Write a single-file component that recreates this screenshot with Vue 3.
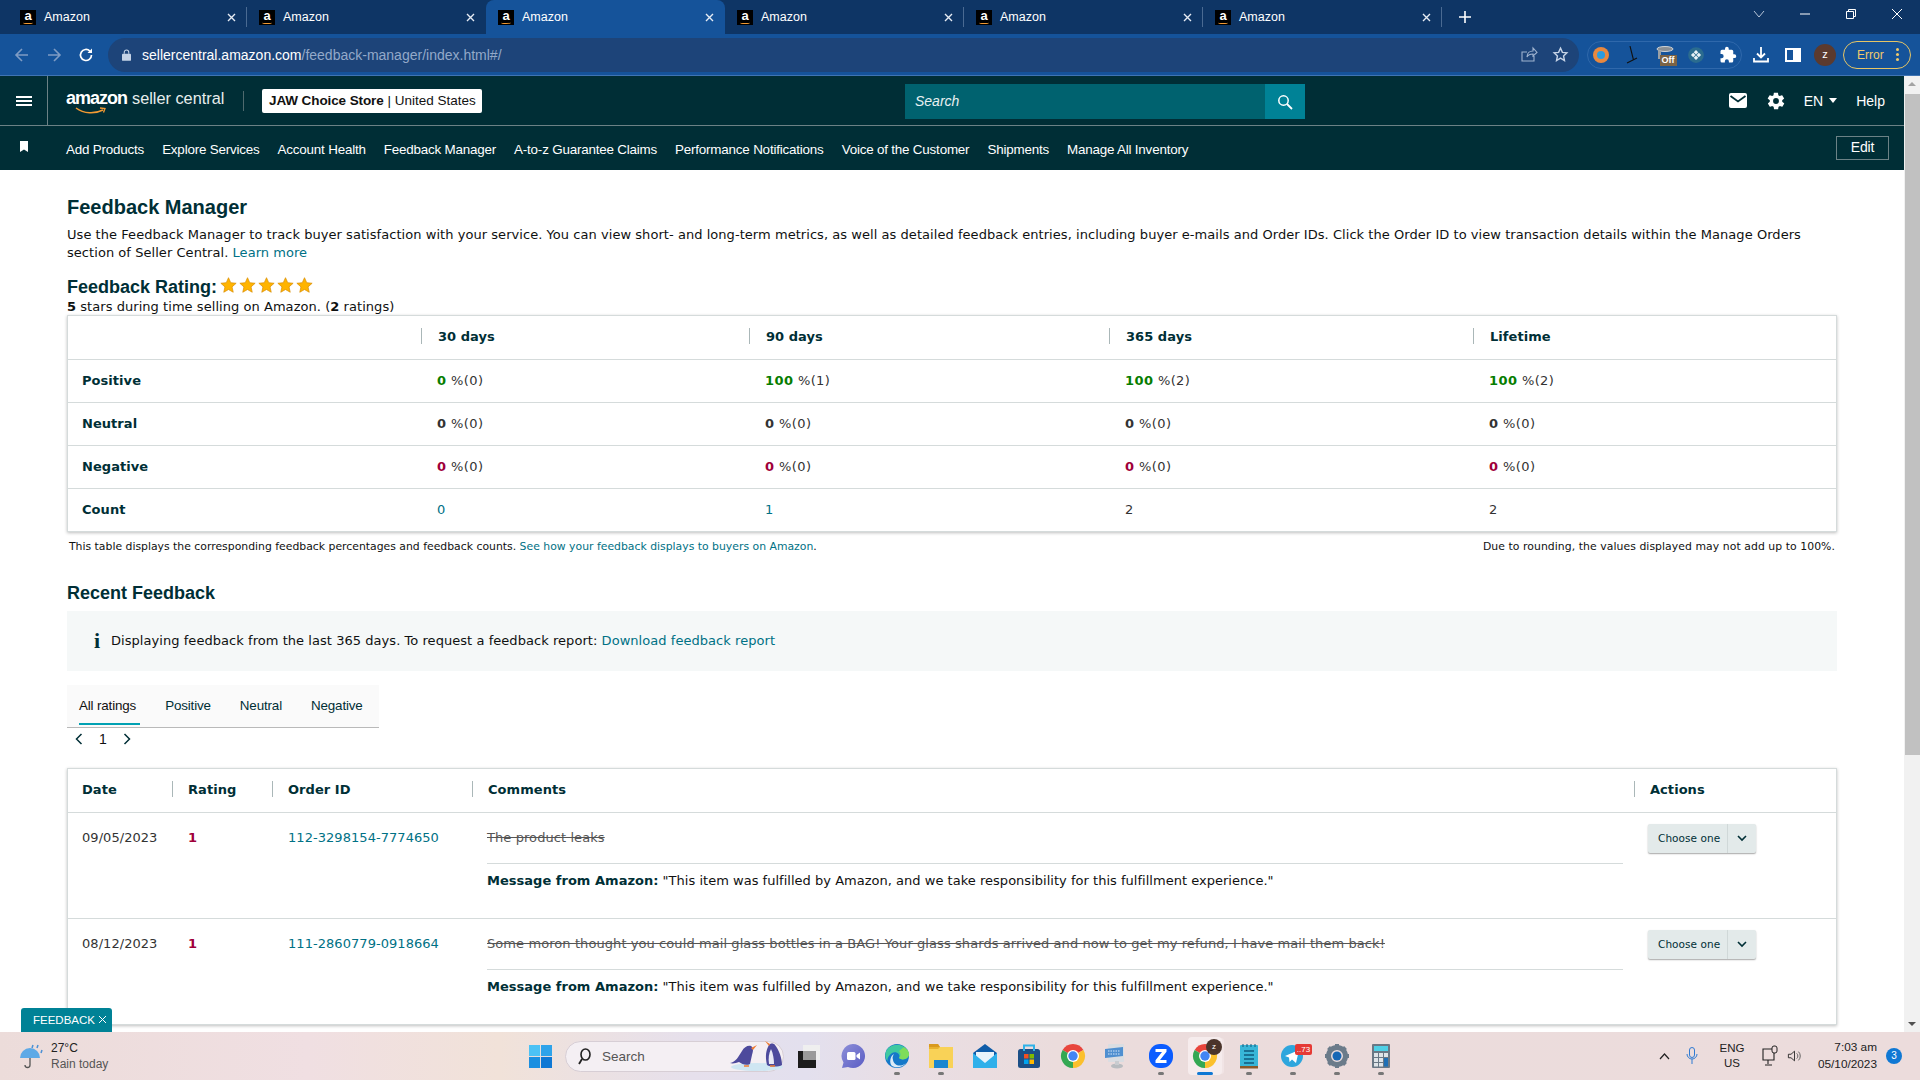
<template>
  <div class="screen">
    <!-- browser tabs -->
    <div class="tabstrip">
      <div v-for="(tab, i) in tabs" :key="i" class="tab" :class="{ active: i === 2 }">
        <span class="favicon">a</span>
        <span class="tab-title">Amazon</span>
        <svg class="tab-x" width="9" height="9" viewBox="0 0 9 9"><path d="M1 1l7 7M8 1L1 8" stroke="#e6ecf4" stroke-width="1.400" /></svg>
      </div>
      <svg class="newtab" width="12" height="12" viewBox="0 0 12 12"><path d="M6 0v12M0 6h12" stroke="#fff" stroke-width="1.600" /></svg>
      <div class="winbtns">
        <svg width="12" height="8" viewBox="0 0 12 8"><path d="M1 1l5 6 5-6" fill="none" stroke="#b7c5d8" /></svg>
        <svg width="12" height="12" viewBox="0 0 12 12"><path d="M1 6h10" stroke="#fff" /></svg>
        <svg width="12" height="12" viewBox="0 0 12 12"><path d="M1.500 3.500h7v7h-7zM3.500 3V1.500h7v7H9" fill="none" stroke="#fff" /></svg>
        <svg width="12" height="12" viewBox="0 0 12 12"><path d="M1 1l10 10M11 1L1 11" stroke="#fff" /></svg>
      </div>
    </div>

    <!-- browser toolbar -->
    <div class="toolbar">
      <svg class="navic" width="16" height="16" viewBox="0 0 16 16"><path d="M14 8H2M8 2L2 8l6 6" fill="none" stroke="#7f9cc4" stroke-width="1.600" /></svg>
      <svg class="navic" width="16" height="16" viewBox="0 0 16 16"><path d="M2 8h12M8 2l6 6-6 6" fill="none" stroke="#7f9cc4" stroke-width="1.600" /></svg>
      <svg class="navic" width="16" height="16" viewBox="0 0 16 16"><path d="M13.500 8a5.500 5.500 0 1 1-1.600-3.900" fill="none" stroke="#fff" stroke-width="1.700" /><path d="M14 1.500V6H9.500z" fill="#fff" /></svg>
      <div class="omnibox">
        <svg width="9" height="12" viewBox="0 0 10 13"><path d="M2.500 5V3.500a2.500 2.500 0 0 1 5 0V5" fill="none" stroke="#c5d3e6" stroke-width="1.200" /><rect y="5" width="10" height="8" rx="1" fill="#c5d3e6" /></svg>
        <span class="url"><span class="url-host">sellercentral.amazon.com</span>/feedback-manager/index.html#/</span>
        <svg class="omni-share" width="18" height="18" viewBox="0 0 18 18"><path d="M14 10v5H2V6h5M7 11c0-4 3-6 6-6V2l4 4.500L13 10V8c-3 0-5 1-6 3z" fill="none" stroke="#9fb3cf" stroke-width="1.100" /></svg>
        <svg width="17" height="17" viewBox="0 0 24 24"><path d="M12 3l2.700 6 6.300.7-4.700 4.300 1.300 6.500L12 17.200 6.400 20.500 7.700 14 3 9.700 9.300 9z" fill="none" stroke="#c5d3e6" stroke-width="2" /></svg>
      </div>
      <div class="extensions">
        <svg width="18" height="18" viewBox="0 0 18 18"><circle cx="9" cy="9" r="8" fill="#e8883f" /><circle cx="9" cy="9" r="4" fill="#2a9be0" /></svg>
        <svg width="18" height="18" viewBox="0 0 18 18"><path d="M6 0l3.500 14M3 17l10-5" stroke="#111" stroke-width="1.100" /></svg>
        <span class="ext-off">
          <svg width="18" height="14" viewBox="0 0 18 14"><ellipse cx="9" cy="3" rx="8" ry="2.500" fill="#8a8f94" stroke="#cfd3d6" /><path d="M2 4v9h3V5z" fill="#9aa0a5" /></svg>
          <span class="off-badge">Off</span>
        </span>
        <svg width="18" height="18" viewBox="0 0 16 16"><circle cx="8" cy="8" r="7" fill="#2b6c8f" /><path d="M8 3.500l2 2-2 2-2-2zM8 8.500l2 2-2 2-2-2zM3.500 8l2-2 2 2-2 2zM8.500 8l2-2 2 2-2 2z" fill="#e8f1f6" /></svg>
        <svg width="18" height="18" viewBox="0 0 24 24"><path d="M20.500 11H19V7a2 2 0 0 0-2-2h-4V3.500a2.500 2.500 0 0 0-5 0V5H4a2 2 0 0 0-2 2v3.800h1.500a2.700 2.700 0 0 1 0 5.400H2V20a2 2 0 0 0 2 2h3.800v-1.500a2.700 2.700 0 0 1 5.400 0V22H17a2 2 0 0 0 2-2v-4h1.500a2.500 2.500 0 0 0 0-5z" fill="#fff" /></svg>
      </div>
      <svg width="18" height="18" viewBox="0 0 18 18"><path d="M9 1v10M5 7.500L9 11.500l4-4M2 12v3.500h14V12" fill="none" stroke="#fff" stroke-width="1.800" /></svg>
      <svg class="sidepanel" width="16" height="16" viewBox="0 0 16 16"><path d="M1 2h14v12H1z" fill="none" stroke="#fff" stroke-width="2" /><path d="M8 2h7v12H8z" fill="#fff" /></svg>
      <span class="avatar">z</span>
      <span class="errorpill">Error<i class="dots"></i></span>
    </div>

    <!-- page -->
    <div class="viewport">
      <div class="page">
        <header class="sc-top">
          <div class="burger"><span></span><span></span><span></span></div>
          <div class="logo">
            <span class="logo-amazon">amazon</span><span class="logo-sc">seller central</span>
            <svg class="logo-smile" width="32" height="8" viewBox="0 0 32 8"><path d="M1 1c8 6 19 6 27 2" fill="none" stroke="#f29a33" stroke-width="1.500" /><path d="M25 1l5 .5-1.500 4" fill="none" stroke="#f29a33" stroke-width="1.300" /></svg>
          </div>
          <span class="logo-div"></span>
          <div class="store"><b>JAW Choice Store</b> | United States</div>
          <div class="search">
            <span class="search-input">Search</span>
            <span class="search-btn">
              <svg width="16" height="16" viewBox="0 0 16 16"><circle cx="6.500" cy="6.500" r="4.700" fill="none" stroke="#fff" stroke-width="1.500" /><path d="M10 10l5 5" stroke="#fff" stroke-width="1.800" /></svg>
            </span>
          </div>
          <div class="top-right">
            <svg width="18" height="15" viewBox="0 0 18 15"><rect width="18" height="15" rx="2" fill="#fff" /><path d="M1.500 3L9 8.500 16.500 3" fill="none" stroke="#002e36" stroke-width="1.800" /></svg>
            <svg class="gear" width="20" height="20" viewBox="0 0 24 24"><path fill="#fff" fill-rule="evenodd" d="M19.400 13c.1-.3.100-.7.100-1s0-.7-.1-1l2.100-1.600c.2-.2.200-.4.100-.6l-2-3.500c-.1-.2-.4-.3-.6-.2l-2.500 1c-.5-.4-1.100-.7-1.700-1l-.4-2.700c0-.2-.2-.4-.5-.4h-4c-.3 0-.5.200-.5.400l-.4 2.700c-.6.300-1.200.6-1.700 1l-2.500-1c-.2-.1-.5 0-.6.200l-2 3.500c-.1.200-.1.400.1.600L4.600 11c-.1.300-.1.700-.1 1s0 .7.100 1l-2.100 1.600c-.2.200-.2.400-.1.600l2 3.500c.1.200.4.300.6.200l2.500-1c.5.400 1.100.7 1.700 1l.4 2.700c0 .2.200.4.500.4h4c.3 0 .5-.2.500-.4l.4-2.700c.6-.3 1.200-.6 1.700-1l2.500 1c.2.100.5 0 .6-.2l2-3.500c.1-.2.100-.4-.1-.6L19.400 13zM12 15.500a3.500 3.500 0 1 1 0-7 3.500 3.500 0 0 1 0 7z" /></svg>
            <span class="lang">EN<i class="caret"></i></span>
            <span class="help">Help</span>
          </div>
        </header>
        <nav class="sc-nav">
          <svg class="bookmark" width="8" height="11" viewBox="0 0 8 11"><path d="M0 0h8v11L4 8.500 0 11z" fill="#fff" /></svg>
          <a v-for="link in navLinks" :key="link">{{ link }}</a>
          <span class="edit">Edit</span>
        </nav>

        <main class="content">
          <h1>Feedback Manager</h1>
          <p class="intro">Use the Feedback Manager to track buyer satisfaction with your service. You can view short- and long-term metrics, as well as detailed feedback entries, including buyer e-mails and Order IDs. Click the Order ID to view transaction details within the Manage Orders section of Seller Central. <a>Learn more</a></p>

          <div class="rating-head">
            <h2>Feedback Rating:</h2>
            <svg v-for="n in 5" :key="n" width="17" height="16" viewBox="0 0 24 23"><path d="M12 1l3.200 7.200 7.800.8-5.900 5.200 1.700 7.700L12 18l-6.800 3.900 1.700-7.700L1 9l7.800-.8z" fill="#ffb400" stroke="#d88c00" stroke-width="1" /></svg>
          </div>
          <p class="rating-sub"><b>5</b> stars during time selling on Amazon. (<b>2</b> ratings)</p>

          <div class="card metrics">
            <div class="m-row m-head">
              <div></div>
              <div v-for="h in periods" :key="h" class="th">{{ h }}</div>
            </div>
            <div v-for="row in metrics" :key="row.label" class="m-row">
              <div class="row-label">{{ row.label }}</div>
              <div v-for="(cell, i) in row.cells" :key="i" class="td">
                <template v-if="row.label === 'Count'"><span :class="{ link: i < 2 }">{{ cell[0] }}</span></template>
                <template v-else><b :class="row.tone">{{ cell[0] }}</b> %({{ cell[1] }})</template>
              </div>
            </div>
          </div>
          <div class="table-note">
            <span>This table displays the corresponding feedback percentages and feedback counts. <a>See how your feedback displays to buyers on Amazon</a>.</span>
            <span class="note-right">Due to rounding, the values displayed may not add up to 100%.</span>
          </div>

          <h2 class="recent">Recent Feedback</h2>
          <div class="infobar">
            <span class="info-i">i</span>
            <span>Displaying feedback from the last 365 days. To request a feedback report: <a>Download feedback report</a></span>
          </div>

          <div class="tabs">
            <span v-for="(t, i) in filterTabs" :key="t" class="ftab" :class="{ on: i === 0 }">{{ t }}</span>
          </div>
          <div class="pager">
            <svg width="8" height="12" viewBox="0 0 8 12"><path d="M6.500 1L1.500 6l5 5" fill="none" stroke="#002f36" stroke-width="1.500" /></svg>
            <span>1</span>
            <svg width="8" height="12" viewBox="0 0 8 12"><path d="M1.500 1l5 5-5 5" fill="none" stroke="#002f36" stroke-width="1.500" /></svg>
          </div>

          <div class="card feed">
            <div class="f-row f-head">
              <div class="th">Date</div>
              <div class="th">Rating</div>
              <div class="th">Order ID</div>
              <div class="th">Comments</div>
              <div class="th">Actions</div>
            </div>
            <div v-for="item in feedback" :key="item.order" class="f-row f-item">
              <div>{{ item.date }}</div>
              <div class="rate">1</div>
              <div class="link">{{ item.order }}</div>
              <div class="comment">
                <div class="strike">{{ item.comment }}</div>
                <div class="amz-msg"><b>Message from Amazon:</b> "This item was fulfilled by Amazon, and we take responsibility for this fulfillment experience."</div>
              </div>
              <div>
                <span class="choose">
                  <span class="choose-label">Choose one</span>
                  <span class="choose-arrow"><svg width="10" height="7" viewBox="0 0 10 7"><path d="M1 1l4 4 4-4" fill="none" stroke="#002f36" stroke-width="1.600" /></svg></span>
                </span>
              </div>
            </div>
          </div>
        </main>
        <div class="feedback-tab">FEEDBACK<svg width="9" height="9" viewBox="0 0 9 9"><path d="M1 1l7 7M8 1L1 8" stroke="#fff" /></svg></div>
      </div>
      <div class="scrollbar">
        <svg width="16" height="16" viewBox="0 0 16 16"><path d="M4 10l4-4 4 4z" fill="#a3a3a3" /></svg>
        <div class="thumb"></div>
        <svg width="16" height="16" viewBox="0 0 16 16"><path d="M4 6l4 4 4-4z" fill="#505050" /></svg>
      </div>
    </div>

    <!-- windows taskbar -->
    <div class="taskbar">
      <div class="weather">
        <svg width="24" height="25" viewBox="0 0 24 25"><path d="M0 14a10 10 0 0 1 20 0z" fill="#5ea9e6" /><path d="M10 14v7a2.500 2.500 0 0 1-5 0" fill="none" stroke="#555" stroke-width="1.300" /><path d="M13 1l-1 3M18 1l-1 3M22 6l-1 3" stroke="#4a90d6" stroke-width="1.500" /></svg>
        <div><div>27°C</div><div class="w-sub">Rain today</div></div>
      </div>
      <svg class="start" width="23" height="23" viewBox="0 0 24 24">
        <rect width="11.500" height="11.500" fill="#4cc2f5" /><rect x="12.500" width="11.500" height="11.500" fill="#2ea3ea" />
        <rect y="12.500" width="11.500" height="11.500" fill="#1b8fe0" /><rect x="12.500" y="12.500" width="11.500" height="11.500" fill="#0f78d4" />
      </svg>
      <div class="tb-search">
        <svg width="16" height="17" viewBox="0 0 16 17"><ellipse cx="9.500" cy="6.500" rx="4.500" ry="5.500" fill="none" stroke="#222" stroke-width="1.600" /><path d="M6 11L3 16" stroke="#222" stroke-width="1.800" /></svg>
        <span>Search</span>
        <svg class="penguins" width="56" height="32" viewBox="0 0 56 32">
          <ellipse cx="30" cy="28" rx="26" ry="4" fill="#cfe6f2" />
          <path d="M3 24c6-1 8-6 12-12 2-4 6-6 9-5 3 2 2 6 1 9l-2 9c-4 2-8 0-11-2-3 1-6 2-9 1z" fill="#4d4a9c" />
          <path d="M40 26c-2-9-1-15 2-20 1-2 5-2 6 0 4 5 7 13 7 20-3 2-12 2-15 0z" fill="#4d4a9c" />
          <path d="M42 25c-1-6 0-11 2-15 2 4 3 10 3 15z" fill="#e9e9f5" />
          <path d="M24 9l6-3-4 5zM42 7l-4-5 5 3z" fill="#ef7d35" />
          <path d="M17 27h5M43 27h5" stroke="#ef7d35" stroke-width="1.500" />
        </svg>
      </div>
      <div class="apps">
        <span v-for="app in apps" :key="app.id" class="app" :class="{ current: app.id === 'chrome2', running: app.dot }">
          <svg width="30" height="30" viewBox="0 0 30 30" v-html="app.svg"></svg>
          <em v-if="app.badge" class="app-badge" :class="app.badgeClass">{{ app.badge }}</em>
        </span>
      </div>
      <div class="tray">
        <svg width="11" height="7" viewBox="0 0 11 7"><path d="M1 6l4.500-5L10 6" fill="none" stroke="#222" stroke-width="1.200" /></svg>
        <svg class="mic" width="12" height="18" viewBox="0 0 12 18"><rect x="3.500" y="0.500" width="5" height="10" rx="2.500" fill="none" stroke="#2f7bd3" /><path d="M1 7a5 5 0 0 0 10 0M6 12v5" fill="none" stroke="#2f7bd3" /></svg>
        <div class="tray-lang"><div>ENG</div><div>US</div></div>
        <svg class="monitor" width="16" height="22" viewBox="0 0 16 22"><path d="M1 4h11v11H1zM6 15v4M3 20h7" fill="none" stroke="#222" stroke-width="1.100" /><rect x="10" y="1" width="5" height="7" rx="2" fill="#eddcdc" stroke="#222" /></svg>
        <svg class="speaker" width="15" height="14" viewBox="0 0 16 16"><path d="M1 6h3l4-3.500v11L4 10H1z" fill="none" stroke="#222" /><path d="M10.500 5a4 4 0 0 1 0 6M12.500 3a7 7 0 0 1 0 10" fill="none" stroke="#555" /></svg>
        <div class="clock"><div>7:03 am</div><div>05/10/2023</div></div>
        <span class="notif">3</span>
      </div>
    </div>
  </div>
</template>

<script setup>
const tabs = [1, 2, 3, 4, 5, 6]

const navLinks = [
  'Add Products',
  'Explore Services',
  'Account Health',
  'Feedback Manager',
  'A-to-z Guarantee Claims',
  'Performance Notifications',
  'Voice of the Customer',
  'Shipments',
  'Manage All Inventory',
]

const periods = ['30 days', '90 days', '365 days', 'Lifetime']

const metrics = [
  { label: 'Positive', tone: 'green', cells: [[0, 0], [100, 1], [100, 2], [100, 2]] },
  { label: 'Neutral', tone: '', cells: [[0, 0], [0, 0], [0, 0], [0, 0]] },
  { label: 'Negative', tone: 'maroon', cells: [[0, 0], [0, 0], [0, 0], [0, 0]] },
  { label: 'Count', tone: '', cells: [[0], [1], [2], [2]] },
]

const filterTabs = ['All ratings', 'Positive', 'Neutral', 'Negative']

const feedback = [
  { date: '09/05/2023', order: '112-3298154-7774650', comment: 'The product leaks' },
  { date: '08/12/2023', order: '111-2860779-0918664', comment: 'Some moron thought you could mail glass bottles in a BAG! Your glass shards arrived and now to get my refund, I have mail them back!' },
]

// taskbar icons, drawn by hand
const chrome = '<path d="M15 15L4.600 9A12 12 0 0 1 25.400 9z" fill="#e8453c"/><path d="M15 15L25.400 9A12 12 0 0 1 15 27z" fill="#fbc02d"/><path d="M15 15L15 27A12 12 0 0 1 4.600 9z" fill="#34a853"/><circle cx="15" cy="15" r="6" fill="#fff"/><circle cx="15" cy="15" r="4.700" fill="#4285f4"/>'

const apps = [
  { id: 'tasks', svg: '<rect x="4" y="10" width="18" height="17" fill="#1c1c1c"/><rect x="9" y="4" width="17" height="15" fill="#efefef"/><rect x="9" y="10" width="13" height="9" fill="#9a9a9a"/>' },
  { id: 'teams', svg: '<defs><linearGradient id="tm" x1="0" y1="0" x2="1" y2="1"><stop offset="0" stop-color="#8d8fd8"/><stop offset="1" stop-color="#5a5cc4"/></linearGradient></defs><path d="M15 3a12 12 0 1 1-5 22.900L4 27l1.500-5.500A12 12 0 0 1 15 3z" fill="url(#tm)"/><rect x="9" y="11" width="8.500" height="8" rx="1.500" fill="#fff"/><path d="M18.500 14l3.500-2.500v7L18.500 16z" fill="#fff"/>' },
  { id: 'edge', dot: true, svg: '<circle cx="15" cy="15" r="12" fill="#1578c9"/><path d="M3.500 12C6 2 22 0 27 12c1 6-7 8-10 5 2-4-3-7-7-5-3 2-5 5-4.500 8C3.500 18 3 15 3.500 12z" fill="#3fc9a0"/><path d="M22 6a12 12 0 0 1 5 6c1 6-7 8-10 5 2-2 2-5 0-7z" fill="#7fdc5a"/><path d="M10 25c4 2 10 2 14-3-6 5-12 2-13-3-1-3 0-4 1-6-4 2-5 9-2 12z" fill="#fff" opacity="0.850"/>' },
  { id: 'files', dot: true, svg: '<path d="M3 3h9l2 3h13v21H3z" fill="#f9d257"/><path d="M3 3h9l2 3H3z" fill="#d99a1f"/><path d="M3 6h11l-2 2H3z" fill="#e8b22f"/><rect x="8" y="19" width="14" height="8" fill="#1b86d0"/>' },
  { id: 'mail', svg: '<path d="M15 3l12 9v14H3V12z" fill="#0f5ca8"/><path d="M6 11h18v7l-9 6-9-6z" fill="#e9f3fa"/><path d="M3 12l12 10 12-10v15H3z" fill="#2fb0ea"/>' },
  { id: 'store', svg: '<rect x="4" y="8" width="22" height="19" rx="2.500" fill="#1c4f86"/><path d="M10 10V4.500h10V10" fill="none" stroke="#2fb2e8" stroke-width="2"/><rect x="10" y="13" width="4.500" height="4.500" fill="#f25022"/><rect x="15.500" y="13" width="4.500" height="4.500" fill="#7fba00"/><rect x="10" y="18.500" width="4.500" height="4.500" fill="#00a4ef"/><rect x="15.500" y="18.500" width="4.500" height="4.500" fill="#ffb900"/>' },
  { id: 'chrome1', svg: chrome },
  { id: 'kbd', svg: '<rect x="6" y="3" width="16" height="18" rx="1" fill="#d9dde2"/><path d="M3 8l18-2v9l-18 2z" fill="#4f8fd0"/><path d="M6 10h12M6 13h12" stroke="#d6e7f8" stroke-dasharray="1.500 1"/><ellipse cx="15" cy="25" rx="6" ry="2.500" fill="#b8bcc0"/><rect x="13" y="20" width="4" height="4" fill="#c9ccd0"/>' },
  { id: 'zoom', dot: true, svg: '<rect x="3" y="3" width="24" height="24" rx="11" fill="#0b5cff"/><path d="M9.500 8h11v2.800L14 19h6.500v3h-11v-2.800L16 11H9.500z" fill="#fff"/>' },
  { id: 'chrome2', dot: true, badge: 'z', badgeClass: 'badge-brown', svg: chrome },
  { id: 'notes', dot: true, svg: '<rect x="6" y="4" width="18" height="23" rx="1" fill="#38b6d8"/><path d="M10 10h10M10 14h10M10 18h10M10 22h10" stroke="#0f5a7c" stroke-width="1.500"/><rect x="6" y="25" width="18" height="2.500" fill="#8a5a2b"/><path d="M9 3v3M13 3v3M17 3v3M21 3v3" stroke="#0f5a7c"/>' },
  { id: 'tele', dot: true, badge: '..73', badgeClass: 'badge-red', svg: '<circle cx="14" cy="15" r="11" fill="#2ea6dd"/><path d="M7 15l14-6-3 13-4-3.500-2.500 2.500-.5-4.500z" fill="#fff"/>' },
  { id: 'gear', dot: true, svg: '<circle cx="15" cy="15" r="8.500" fill="none" stroke="#6b7b8a" stroke-width="5"/><path d="M15 3v5M15 22v5M3 15h5M22 15h5M6.500 6.500l3.500 3.500M20 20l3.500 3.500M23.500 6.500L20 10M10 20l-3.500 3.500" stroke="#6b7b8a" stroke-width="4"/><circle cx="15" cy="15" r="4.500" fill="#1767b5"/>' },
  { id: 'calc', dot: true, svg: '<rect x="6" y="3" width="18" height="24" rx="1" fill="#6a7885"/><rect x="8" y="5" width="14" height="5" fill="#4fd0e6"/><path d="M8 12h4v4H8zM13 12h4v4h-4zM18 12h4v4h-4zM8 17h4v4H8zM13 17h4v4h-4zM8 22h4v3.500H8zM13 22h4v3.500h-4z" fill="#dfe4e8"/><rect x="18" y="17" width="4" height="8.500" fill="#1f6fb5"/>' },
]
</script>

<style scoped>
.screen {
  width: 1920px;
  height: 1080px;
  display: flex;
  flex-direction: column;
  overflow: hidden;
  font-family: "DejaVu Sans", Verdana, sans-serif;
  color: #0f1111;
  background: #fff;
}

/* tabs */
.tabstrip {
  height: 34px;
  background: #0e3565;
  display: flex;
  align-items: flex-end;
  padding-left: 8px;
  font-family: "Liberation Sans", sans-serif;
  flex: none;
}
.tab {
  width: 239px;
  height: 34px;
  display: flex;
  align-items: center;
  gap: 8px;
  padding: 0 11px 0 12px;
  box-sizing: border-box;
  color: #fff;
  font-size: 12.500px;
  position: relative;
  flex: none;
}
.tab::after {
  content: "";
  position: absolute;
  right: 0;
  top: 7px;
  height: 20px;
  width: 1px;
  background: #4a6a92;
}
.tab.active {
  background: #15539a;
  border-radius: 8px 8px 0 0;
}
.tab.active::after { display: none; }
.tab:nth-child(2)::after { display: none; }
.favicon {
  width: 16px;
  height: 15px;
  background: #000;
  color: #fff;
  font: bold 13px/12px "Liberation Sans", sans-serif;
  text-align: center;
  position: relative;
  flex: none;
}
.favicon::after {
  content: "";
  position: absolute;
  left: 3px;
  right: 3px;
  bottom: 1px;
  height: 2px;
  border-bottom: 1px solid #f29a33;
  border-radius: 0 0 50% 50%;
}
.tab-title { flex: 1; }
.newtab {
  margin-left: 17px;
  align-self: center;
  flex: none;
}
.winbtns {
  margin-left: auto;
  align-self: center;
  display: flex;
  gap: 34px;
  align-items: center;
  padding-right: 17px;
  padding-bottom: 6px;
}

/* toolbar */
.toolbar {
  height: 42px;
  flex: none;
  background: #15539a;
  border-bottom: 1px solid #3f74b4;
  box-sizing: border-box;
  display: flex;
  align-items: center;
  padding-left: 14px;
  font-family: "Liberation Sans", sans-serif;
}
.navic { margin-right: 16px; flex: none; }
.omnibox {
  margin-left: -2px;
  width: 1471px;
  height: 34px;
  border-radius: 17px;
  background: #1d4479;
  display: flex;
  align-items: center;
  padding: 0 10px 0 14px;
  box-sizing: border-box;
  flex: none;
}
.url {
  margin-left: 11px;
  font-size: 14px;
  color: #93a9c9;
  flex: 1;
}
.url-host { color: #fff; }
.omni-share { margin-right: 14px; }
.extensions {
  margin-left: 8px;
  width: 155px;
  height: 28px;
  border: 1px solid #2f68ab;
  border-radius: 14px;
  box-sizing: border-box;
  display: flex;
  align-items: center;
  justify-content: space-between;
  padding: 0 4px;
  margin-right: 10px;
  flex: none;
}
.ext-off { position: relative; display: block; height: 18px; width: 18px; }
.off-badge {
  position: absolute;
  left: 4px;
  top: 9px;
  background: #7a6346;
  color: #fff;
  font-size: 9px;
  font-weight: bold;
  padding: 1px 2px;
  line-height: 9px;
}
.sidepanel { margin-left: 15px; flex: none; }
.avatar {
  margin-left: 13px;
  width: 22px;
  height: 22px;
  border-radius: 50%;
  background: #5b3a2e;
  color: #fff;
  font-size: 11px;
  text-align: center;
  line-height: 20px;
  flex: none;
}
.errorpill {
  margin-left: 7px;
  width: 68px;
  height: 28px;
  border: 1px solid #e6c565;
  border-radius: 14px;
  box-sizing: border-box;
  color: #f1c96a;
  font-size: 12px;
  display: flex;
  align-items: center;
  padding-left: 13px;
  position: relative;
  flex: none;
}
.dots {
  position: absolute;
  right: 11px;
  top: 6px;
  width: 3px;
  height: 3px;
  border-radius: 50%;
  background: #f1c96a;
  box-shadow: 0 5px 0 #f1c96a, 0 10px 0 #f1c96a;
}

/* viewport */
.viewport {
  flex: 1;
  display: flex;
  min-height: 0;
}
.page {
  flex: 1;
  min-width: 0;
  position: relative;
  overflow: hidden;
}
.scrollbar {
  width: 16px;
  flex: none;
  background: #f1f1f1;
  display: flex;
  flex-direction: column;
}
.thumb {
  width: 15px;
  margin: 2px 0 0 1px;
  height: 661px;
  background: #c1c1c1;
}
.scrollbar svg:last-child { margin-top: auto; }

.sc-top {
  height: 49px;
  background: #002e36;
  border-bottom: 1px solid #6c8286;
  display: flex;
  align-items: center;
  font-family: "Liberation Sans", sans-serif;
  color: #fff;
}
.burger {
  width: 48px;
  height: 49px;
  border-right: 1px solid #6c8286;
  display: flex;
  flex-direction: column;
  justify-content: center;
  gap: 2px;
  padding-left: 16px;
  box-sizing: border-box;
  flex: none;
}
.burger span {
  display: block;
  width: 16px;
  height: 2px;
  background: #fff;
}
.logo {
  margin-left: 18px;
  position: relative;
  height: 49px;
  width: 159px;
  flex: none;
  white-space: nowrap;
}
.logo-amazon {
  font: bold 18px/45px "Liberation Sans", sans-serif;
  letter-spacing: -1px;
}
.logo-sc {
  font: 16.300px/45px "Liberation Sans", sans-serif;
  margin-left: 5px;
  color: #e7eded;
}
.logo-smile { position: absolute; left: 9px; top: 31px; }
.logo-div {
  margin-left: 18px;
  width: 1px;
  height: 20px;
  background: #4f6a6e;
  flex: none;
}
.store {
  margin-left: 18px;
  height: 24px;
  padding: 0 7px;
  background: #fff;
  color: #111;
  border-radius: 2px;
  font-size: 13.500px;
  line-height: 24px;
  white-space: nowrap;
  width: 220px;
  box-sizing: border-box;
  flex: none;
}
.store b { font-weight: 700; letter-spacing: -0.100px; }
.search {
  margin-left: 423px;
  margin-top: 2px;
  display: flex;
  width: 400px;
  height: 35px;
  flex: none;
}
.search-input {
  flex: 1;
  background: #00626f;
  color: #e8f0f1;
  font-style: italic;
  font-size: 14px;
  line-height: 35px;
  padding-left: 10px;
}
.search-btn {
  width: 40px;
  background: #008296;
  display: flex;
  align-items: center;
  justify-content: center;
}
.top-right {
  margin-left: auto;
  display: flex;
  align-items: center;
  padding-right: 19px;
}
.gear { margin-left: 19px; }
.lang {
  margin-left: 18px;
  font-size: 14px;
  display: flex;
  align-items: center;
  gap: 6px;
}
.caret {
  border: 4px solid transparent;
  border-top: 5px solid #fff;
  border-bottom: 0;
  width: 0;
  height: 0;
}
.help { margin-left: 19px; font-size: 14px; }

.sc-nav {
  height: 44px;
  box-sizing: border-box;
  padding-top: 2px;
  background: #002e36;
  display: flex;
  align-items: center;
  font-family: "Liberation Sans", sans-serif;
  color: #fff;
  font-size: 13.400px;
  letter-spacing: -0.190px;
  padding-left: 20px;
}
.sc-nav a { margin-right: 18px; white-space: nowrap; color: #fff; }
.bookmark { margin-right: 38px; margin-top: -6px; flex: none; }
.edit {
  margin-left: auto;
  margin-right: 15px;
  border: 1px solid #6c8286;
  width: 53px;
  height: 24px;
  line-height: 21px;
  text-align: center;
  box-sizing: border-box;
  font-size: 14px;
  margin-top: -2px;
}

/* content */
.content {
  padding: 24px 67px 0 67px;
  font-size: 13px;
  line-height: 18px;
  letter-spacing: 0.050px;
  color: #0f1111;
}
a { color: #007185; }
h1 {
  margin: 0;
  font: bold 20px/26px "Liberation Sans", sans-serif;
  color: #002f36;
  letter-spacing: 0;
}
.intro { margin: 6px 0 0; line-height: 18.400px; }
.rating-head {
  margin-top: 12px;
  display: flex;
  align-items: center;
  height: 24px;
}
.rating-head h2 { margin-right: 3px; }
.rating-head svg { margin-right: 2px; margin-top: -3px; }
h2 {
  margin: 0;
  font: bold 18px/24px "Liberation Sans", sans-serif;
  color: #002f36;
  letter-spacing: 0;
}
.rating-sub { margin: 0; line-height: 16px; }

.card {
  border: 1px solid #d5dbdb;
  box-shadow: 0 1px 3px rgba(0, 0, 0, 0.25);
  background: #fff;
}
.m-row {
  display: grid;
  grid-template-columns: 353px 328px 360px 364px 1fr;
  height: 43px;
  align-items: center;
  border-top: 1px solid #d5dbdb;
  box-sizing: border-box;
}
.m-row.m-head { border-top: 0; }
.row-label { padding-left: 14px; font-weight: bold; color: #002f36; }
.td { padding-left: 16px; color: #333; letter-spacing: 0.400px; }
.th {
  font-weight: bold;
  color: #002f36;
  padding-left: 17px;
  position: relative;
}
.th::before {
  content: "";
  position: absolute;
  left: 0;
  top: 0;
  height: 16px;
  width: 1px;
  background: #aab7b8;
}
.green { color: #067d00; }
.maroon { color: #a0003a; }
.link { color: #007185; }
.table-note {
  display: flex;
  justify-content: space-between;
  margin-top: 7px;
  font-size: 10.850px;
  line-height: 16px;
  padding: 0 2px;
  letter-spacing: 0;
}
.note-right { letter-spacing: 0.060px; }

.recent { margin-top: 26px; }
.infobar {
  margin-top: 6px;
  height: 60px;
  background: #f5f8f8;
  display: flex;
  align-items: center;
  padding-left: 27px;
}
.info-i {
  font: bold 22px/20px "Liberation Serif", serif;
  width: 17px;
  color: #002f36;
}
.tabs {
  margin-top: 14px;
  width: 312px;
  height: 43px;
  box-sizing: border-box;
  background: #fafafa;
  border-bottom: 1px solid #b9b9b9;
  display: flex;
  gap: 29px;
  padding-left: 12px;
  font: 13.400px/42px "Liberation Sans", sans-serif;
  letter-spacing: -0.150px;
  color: #002f36;
}
.ftab { position: relative; white-space: nowrap; height: 42px; }
.ftab.on::after {
  content: "";
  position: absolute;
  left: 0;
  right: -4px;
  bottom: 2px;
  height: 2px;
  background: #00a1b3;
}
.ftab.on { color: #111; }
.pager {
  height: 22px;
  display: flex;
  align-items: center;
  gap: 16px;
  padding-left: 8px;
  font: 14px "Liberation Sans", sans-serif;
}

.feed { margin-top: 18px; }
.f-row {
  display: grid;
  grid-template-columns: 104px 100px 200px 1162px 1fr;
}
.f-head {
  height: 43px;
  align-items: center;
}
.f-head .th { padding-left: 16px; }
.f-head .th:first-child { padding-left: 14px; }
.f-head .th:first-child::before { display: none; }
.f-item {
  height: 106px;
  border-top: 1px solid #d5dbdb;
  box-sizing: border-box;
  padding-top: 16px;
  color: #333;
}
.f-item > div:first-child { padding-left: 14px; }
.f-item > div:nth-child(2),
.f-item > div:nth-child(3),
.f-item > div:nth-child(5) { padding-left: 16px; }
.rate { color: #a0003a; font-weight: bold; }
.comment { padding-left: 15px; padding-right: 11px; }
.strike {
  text-decoration: line-through;
  color: #555;
  padding-bottom: 16px;
  border-bottom: 1px solid #d5dbdb;
  letter-spacing: 0.080px;
}
.amz-msg { margin-top: 8px; color: #111; letter-spacing: 0.020px; }
.amz-msg b { color: #002f36; }
.choose {
  display: inline-flex;
  height: 29px;
  margin-left: -2px;
  margin-top: -5px;
  background: #e3eaea;
  border-radius: 2px;
  box-shadow: 0 1px 1.500px rgba(0, 0, 0, 0.35);
  font: 10.500px/28px "DejaVu Sans", sans-serif;
  color: #002f36;
  vertical-align: top;
}
.choose-label { width: 79px; padding-left: 10px; box-sizing: border-box; white-space: nowrap; }
.choose-arrow {
  width: 28px;
  border-left: 1px solid #d0d8d8;
  display: flex;
  align-items: center;
  justify-content: center;
}

.feedback-tab {
  position: absolute;
  left: 21px;
  bottom: 0;
  width: 91px;
  height: 24px;
  box-sizing: border-box;
  background: #008296;
  color: #fff;
  border-radius: 3px 3px 0 0;
  font: 11.500px/24px "Liberation Sans", sans-serif;
  padding-left: 12px;
  white-space: nowrap;
}
.feedback-tab svg { margin-left: 3px; }

/* taskbar */
.taskbar {
  height: 48px;
  flex: none;
  background: linear-gradient(90deg, #ecdcda 0%, #f0dfe2 16%, #f1e2d9 26%, #e6e0ec 36%, #e3e0ee 42%, #e9dee4 47%, #ebdcdc 55%, #ecdcdc 100%);
  display: flex;
  align-items: center;
  font-family: "Liberation Sans", sans-serif;
  font-size: 12px;
  color: #222;
}
.weather {
  display: flex;
  gap: 7px;
  padding-left: 20px;
  align-items: center;
  line-height: 16px;
  width: 529px;
  box-sizing: border-box;
  flex: none;
}
.w-sub { color: #555; }
.start { flex: none; }
.tb-search {
  margin-left: 13px;
  width: 219px;
  height: 31px;
  border-radius: 16px;
  background: #f4eff3;
  border: 1px solid #d7ced5;
  box-sizing: border-box;
  display: flex;
  align-items: center;
  padding-left: 10px;
  gap: 10px;
  font-size: 13.500px;
  color: #555;
  position: relative;
  flex: none;
}
.penguins { position: absolute; right: 0; top: -3px; }
.apps {
  margin-left: 3px;
  display: flex;
  height: 48px;
  flex: none;
}
.app {
  width: 44px;
  height: 48px;
  display: flex;
  justify-content: center;
  padding-top: 9px;
  box-sizing: border-box;
  position: relative;
}
.app.running::after {
  content: "";
  position: absolute;
  left: 19px;
  bottom: 5px;
  width: 6px;
  height: 3px;
  border-radius: 2px;
  background: #777;
}
.app.current::before {
  content: "";
  position: absolute;
  left: 5px;
  top: 5px;
  width: 34px;
  height: 38px;
  background: #f6eced;
  border-radius: 4px;
  box-shadow: 3px 0 0 -1px #f1e4e5;
}
.app.current svg { position: relative; }
.app.current::after {
  left: 14px;
  width: 16px;
  bottom: 5px;
  border-radius: 2px;
  background: #0f78d4;
}
.app-badge {
  position: absolute;
  font-style: normal;
  font-size: 8px;
  color: #fff;
  text-align: center;
}
.badge-brown {
  right: 5px;
  top: 7px;
  width: 16px;
  height: 16px;
  border-radius: 50%;
  background: #4a342b;
  line-height: 15px;
}
.badge-red {
  left: 24px;
  top: 12px;
  width: 17px;
  height: 11px;
  border-radius: 2px;
  background: #e53935;
  line-height: 11px;
}
.tray {
  margin-left: auto;
  height: 48px;
  width: 261px;
  display: flex;
  align-items: center;
  flex: none;
}
.mic { margin-left: 16px; }
.tray-lang {
  text-align: center;
  width: 30px;
  margin-left: 19px;
  line-height: 15px;
  font-size: 11.500px;
}
.monitor { margin-left: 15px; }
.speaker { margin-left: 9px; }
.clock { margin-left: 13px; text-align: right; line-height: 17px; width: 62px; font-size: 11.800px; white-space: nowrap; }
.notif {
  margin-left: 9px;
  width: 16px;
  height: 16px;
  border-radius: 50%;
  background: #0f78d4;
  color: #fff;
  text-align: center;
  font-size: 10px;
  line-height: 16px;
}
</style>
